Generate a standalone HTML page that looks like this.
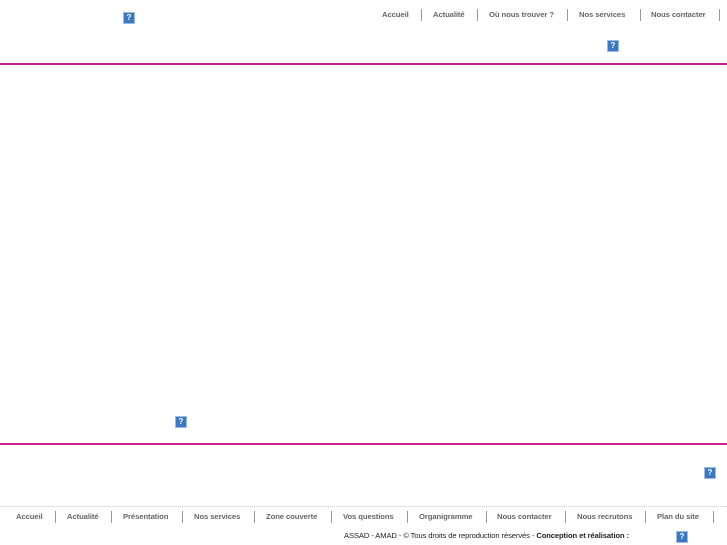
<!DOCTYPE html>
<html><head><meta charset="utf-8"><style>
body{margin:0;width:727px;height:545px;position:relative;background:#fff;font-family:"Liberation Sans",sans-serif;overflow:hidden}
.t{position:absolute;font-size:7.7px;font-weight:bold;color:#666;white-space:nowrap;line-height:10px;letter-spacing:-0.1px}
.s{position:absolute;width:1px;height:12px;background:#999}
.q{position:absolute;width:10px;height:10px;background:#3a78c4;border:1px solid #9bbbe0;color:#fff;font-size:8px;font-weight:bold;text-align:center;line-height:10px}
.m{position:absolute;left:0;width:727px;height:2px;background:#c8208f}
</style></head><body>
<div class="q" style="left:123px;top:12px">?</div>
<div class="q" style="left:607px;top:40px">?</div>
<div class="q" style="left:175px;top:416px">?</div>
<div class="q" style="left:704px;top:467px">?</div>
<div class="q" style="left:676px;top:531px">?</div>
<div class="m" style="top:63px"></div>
<div class="m" style="top:443px"></div>
<div style="position:absolute;left:0;top:506px;width:727px;border-top:1px dotted #ccc"></div>

<span class="t" style="left:382px;top:10px">Accueil</span><div class="s" style="left:421px;top:9px"></div>
<span class="t" style="left:433px;top:10px">Actualité</span><div class="s" style="left:477px;top:9px"></div>
<span class="t" style="left:489px;top:10px">Où nous trouver ?</span><div class="s" style="left:567px;top:9px"></div>
<span class="t" style="left:579px;top:10px">Nos services</span><div class="s" style="left:640px;top:9px"></div>
<span class="t" style="left:651px;top:10px">Nous contacter</span><div class="s" style="left:719px;top:9px"></div>

<span class="t" style="left:16px;top:512px">Accueil</span><div class="s" style="left:55px;top:511px"></div>
<span class="t" style="left:67px;top:512px">Actualité</span><div class="s" style="left:111px;top:511px"></div>
<span class="t" style="left:123px;top:512px">Présentation</span><div class="s" style="left:182px;top:511px"></div>
<span class="t" style="left:194px;top:512px">Nos services</span><div class="s" style="left:254px;top:511px"></div>
<span class="t" style="left:266px;top:512px">Zone couverte</span><div class="s" style="left:331px;top:511px"></div>
<span class="t" style="left:343px;top:512px">Vos questions</span><div class="s" style="left:407px;top:511px"></div>
<span class="t" style="left:419px;top:512px">Organigramme</span><div class="s" style="left:486px;top:511px"></div>
<span class="t" style="left:497px;top:512px">Nous contacter</span><div class="s" style="left:565px;top:511px"></div>
<span class="t" style="left:577px;top:512px">Nous recrutons</span><div class="s" style="left:645px;top:511px"></div>
<span class="t" style="left:657px;top:512px">Plan du site</span><div class="s" style="left:713px;top:511px"></div>

<span class="t" style="left:344px;top:531px;color:#222;font-weight:normal;font-size:7.6px">ASSAD - AMAD - © Tous droits de reproduction réservés - <b>Conception et réalisation :</b></span>
</body></html>
